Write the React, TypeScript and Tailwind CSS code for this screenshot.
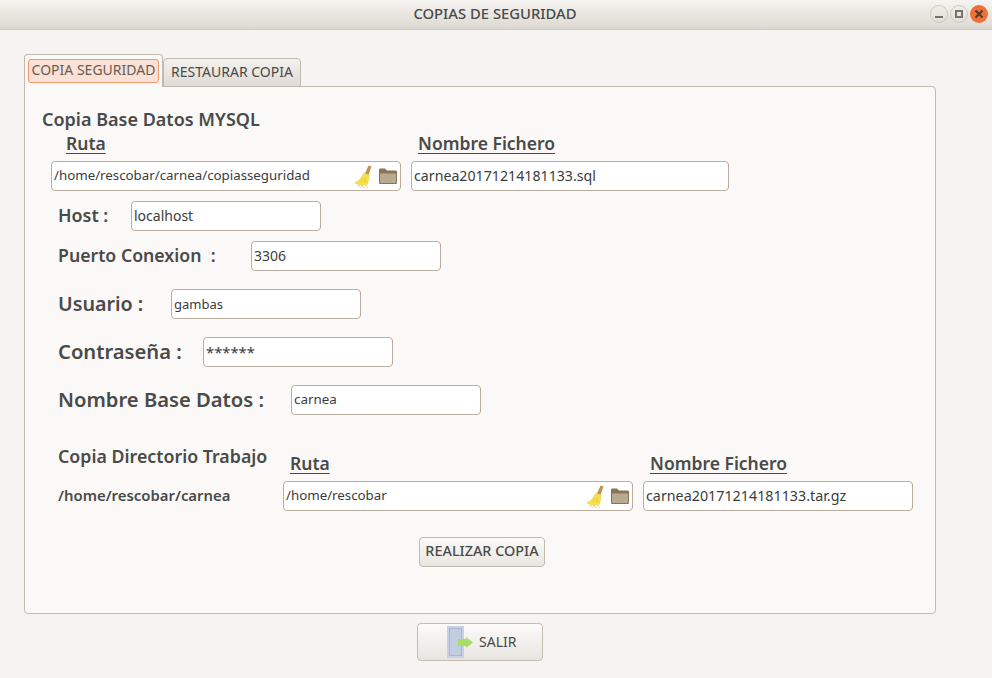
const font = "font-['Noto_Sans','Open_Sans',sans-serif]";

function Broom() {
  return (
    <svg width="19" height="23" viewBox="0 0 19 23" className="shrink-0">
      <path d="M14.5 0.5 L17.5 1.5 L14.5 10 L11 8.5 Z" fill="#c2914f" />
      <path d="M10 8 L15 10.2 L14.5 15 L12.5 21 L10 19 L8.5 21.5 L6.5 19.5 L4.5 20.5 L3.5 18.5 L0.8 18 C5 16 8 12.5 10 8 Z" fill="#f6e24c" stroke="#e0c433" strokeWidth="0.5" />
      <path d="M9.5 12 L7 18 M12 12 L10.5 18" stroke="#dcc02e" strokeWidth="0.7" />
      <path d="M3 21.5 L14 22.5" stroke="#dedbd2" strokeWidth="1" />
    </svg>
  );
}

function Folder() {
  return (
    <svg width="20" height="18" viewBox="0 0 20 18" className="shrink-0">
      <path d="M1 3 C1 2 1.5 1.5 2.5 1.5 L7 1.5 L9 3.5 L17.5 3.5 C18.5 3.5 19 4 19 5 L19 15.5 C19 16.5 18.5 17 17.5 17 L2.5 17 C1.5 17 1 16.5 1 15.5 Z" fill="#8a7455" />
      <path d="M2 6.5 L18 6.5 L18 15 C18 15.7 17.7 16 17 16 L3 16 C2.3 16 2 15.7 2 15 Z" fill="#b8aa90" />
    </svg>
  );
}

function Door() {
  return (
    <svg width="26" height="32" viewBox="0 0 26 32" className="shrink-0">
      <rect x="0" y="0" width="17" height="32" fill="#c8d1e4" />
      <rect x="2.5" y="2.5" width="12" height="27" fill="#c3cde2" stroke="#aab5d0" strokeWidth="1" />
      <path d="M11 13 L19 13 L19 11 L26 16.5 L19 22 L19 20 L11 20 Z" fill="#a8de68" />
    </svg>
  );
}

function Input({ w, value, icons, size = "text-[14px]" }: { w: string; value: string; icons?: boolean; size?: string }) {
  return (
    <div className={`${w} ${size} h-[30px] shrink-0 flex items-center bg-white border border-[#b8ad9e] rounded-[4px] pl-[2px] pr-[2px] text-[#3c3c3c] overflow-hidden`}>
      <span className="flex-1 whitespace-nowrap leading-none">{value}</span>
      {icons && (
        <span className="flex items-center gap-[5px]">
          <Broom />
          <Folder />
        </span>
      )}
    </div>
  );
}

function Field({ label, size, labelW, value, top, inputSize }: { label: string; size: string; labelW: string; value: string; top: string; inputSize?: string }) {
  return (
    <div className={`flex items-center h-[30px] ${top} pl-[33px]`}>
      <span className={`${labelW} ${size} shrink-0 font-semibold leading-none pb-[1px] text-[#4a4a4a] whitespace-pre`}>{label}</span>
      <Input w="w-[190px]" value={value} size={inputSize} />
    </div>
  );
}

export default function App() {
  return (
    <div className={`${font} w-[992px] h-[678px] bg-[#f5f4f2] overflow-hidden flex flex-col text-[#4a4a4a]`}>
      <header className="h-[30px] shrink-0 flex items-center border-b border-[#cfc9bf] bg-gradient-to-b from-[#f6f4f1] to-[#dcd8d1] rounded-t-[6px]">
        <span className="flex-1 text-center text-[14.8px] font-medium text-[#4a4a4a] pl-[60px] pb-[2px]">COPIAS DE SEGURIDAD</span>
        <div className="flex items-center gap-[2px] pr-[4px] pb-[2px]">
          <span className="w-[18px] h-[18px] rounded-full border border-[#cdc8c0] flex items-end justify-center pb-[4px]">
            <span className="w-[8px] h-[2px] bg-[#77736c]" />
          </span>
          <span className="w-[18px] h-[18px] rounded-full border border-[#cdc8c0] flex items-center justify-center">
            <span className="w-[8px] h-[8px] border-2 border-[#77736c]" />
          </span>
          <span className="w-[18px] h-[18px] rounded-full bg-[#ec7038] flex items-center justify-center">
            <svg width="10" height="10" viewBox="0 0 10 10"><path d="M1.5 1.5 L8.5 8.5 M8.5 1.5 L1.5 8.5" stroke="#4c3a2e" strokeWidth="2" /></svg>
          </span>
        </div>
      </header>

      <main className="flex-1 pl-[24px] pt-[24px] flex flex-col">
        <div className="flex items-end h-[33px] relative z-10">
          <div className="w-[139px] h-[33px] border border-b-0 border-[#c2bbaf] rounded-t-[4px] bg-[#faf9f7] px-[3px] pt-[4px]">
            <div className="h-[24px] pb-[3px] rounded-[3px] border border-[#f29a70] bg-[#f9e1d6] flex items-center justify-center text-[14px] text-[#6a5c52] whitespace-nowrap">COPIA SEGURIDAD</div>
          </div>
          <div className="w-[138px] h-[29px] pb-[3px] border border-[#c2bbaf] rounded-t-[4px] bg-gradient-to-b from-[#f4f2ef] to-[#dfdbd5] flex items-center justify-center text-[14px] text-[#4a4a4a] whitespace-nowrap">RESTAURAR COPIA</div>
        </div>

        <section className="w-[912px] h-[528px] -mt-px border border-[#c2bbaf] rounded-b-[4px] rounded-tr-[4px] bg-[#faf9f7]">
          <h2 className="pl-[17px] pt-[20px] h-[44px] text-[18px] leading-[25px] font-semibold text-[#4a4a4a]">Copia Base Datos MYSQL</h2>

          <div className="flex h-[24px] text-[17.5px] leading-[25px] font-semibold underline underline-offset-[3px] decoration-1">
            <span className="ml-[41px] w-[352px]">Ruta</span>
            <span>Nombre Fichero</span>
          </div>

          <div className="flex gap-[10px] pl-[26px] mt-[6px]">
            <Input w="w-[350px]" size="text-[13.3px]" value="/home/rescobar/carnea/copiasseguridad" icons />
            <Input w="w-[318px]" size="text-[14.2px]" value="carnea20171214181133.sql" />
          </div>

          <Field top="mt-[10px]" label="Host :" size="text-[17.9px]" labelW="w-[73px]" value="localhost" />
          <Field top="mt-[10px]" label="Puerto Conexion  :" size="text-[17.7px]" labelW="w-[193px]" value="3306" />
          <Field top="mt-[18px]" label="Usuario :" size="text-[19.7px]" labelW="w-[113px]" value="gambas" inputSize="text-[13px]" />
          <Field top="mt-[18px]" label="Contraseña :" size="text-[20.2px]" labelW="w-[145px]" value="******" inputSize="text-[14.8px]" />
          <Field top="mt-[18px]" label="Nombre Base Datos :" size="text-[20.2px]" labelW="w-[233px]" value="carnea" inputSize="text-[13.4px]" />

          <div className="flex mt-[27px] h-[39px] font-semibold pl-[33px]">
            <span className="w-[232px] text-[17.8px] leading-[28px] whitespace-nowrap">Copia Directorio Trabajo</span>
            <span className="w-[360px] text-[17.5px] leading-[25px] pt-[9px] underline underline-offset-[3px] decoration-1">Ruta</span>
            <span className="text-[17.5px] leading-[25px] pt-[9px] underline underline-offset-[3px] decoration-1">Nombre Fichero</span>
          </div>

          <div className="flex items-center pl-[33px]">
            <span className="w-[225px] text-[14.9px] font-semibold leading-none pb-[1px] whitespace-nowrap">/home/rescobar/carnea</span>
            <div className="flex gap-[10px]">
              <Input w="w-[350px]" size="text-[13.3px]" value="/home/rescobar" icons />
              <Input w="w-[270px]" size="text-[14.3px]" value="carnea20171214181133.tar.gz" />
            </div>
          </div>

          <div className="pl-[394px] mt-[26px]">
            <button className="w-[126px] h-[30px] pb-[2px] border border-[#c2bbaf] rounded-[4px] bg-gradient-to-b from-[#fbfaf8] to-[#e9e6e1] text-[14.4px] font-medium text-[#4a4a4a] whitespace-nowrap">REALIZAR COPIA</button>
          </div>
        </section>

        <div className="pl-[393px] mt-[9px]">
          <button className="w-[126px] h-[38px] border border-[#c2bbaf] rounded-[4px] bg-gradient-to-b from-[#fcfbfa] to-[#e8e5e0] flex items-center justify-start gap-[6px] pl-[29px] text-[14px] text-[#4a4a4a]">
            <Door />
            <span className="pb-[2px]">SALIR</span>
          </button>
        </div>
      </main>
    </div>
  );
}
